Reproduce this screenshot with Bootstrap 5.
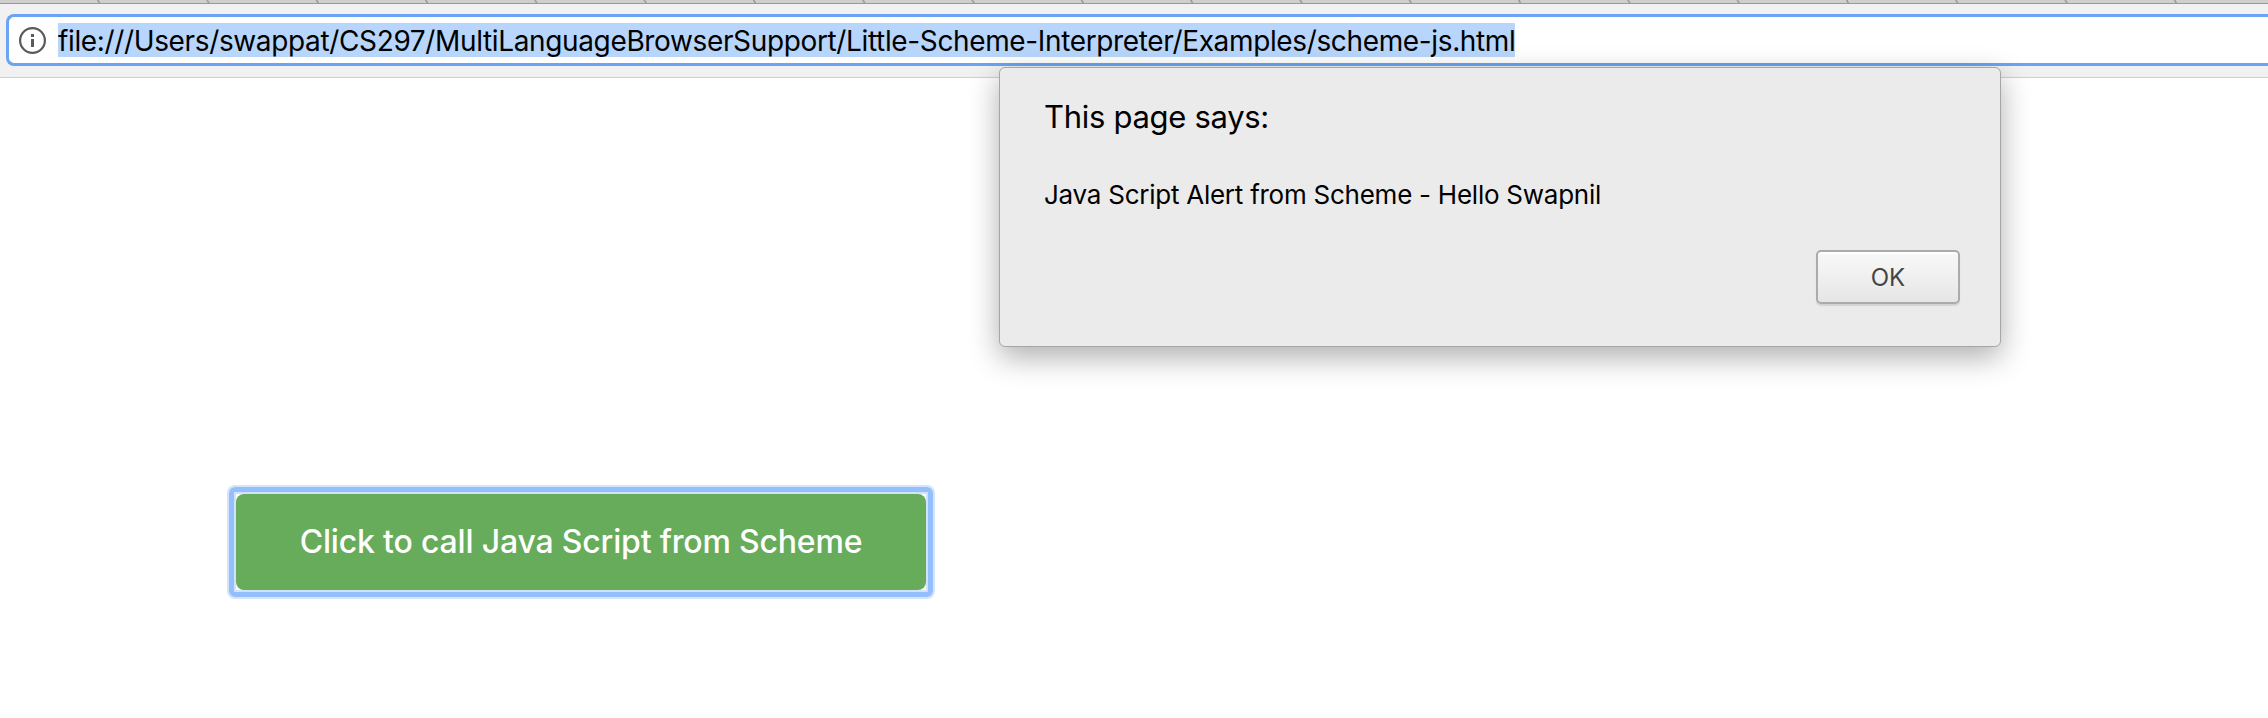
<!DOCTYPE html>
<html lang="en">
<head>
<meta charset="utf-8">
<title>scheme-js.html</title>
<link href="https://cdn.jsdelivr.net/npm/bootstrap@5.3.0/dist/css/bootstrap.min.css" rel="stylesheet">
<style>
  body { font-family: Inter, "Liberation Sans", sans-serif; color: #000; background: #fff; }
  .window { height: 718px; }
  .tab-strip { height: 4px; background: #cfcfcf; border-bottom: 1px solid #989898; }
  .tab-strip svg { display: block; }
  .toolbar { height: 74px; padding: 10px 0 0 6px; background: #f1f1f1; border-bottom: 1px solid #cfcfcf; }
  .omnibox { height: 52px; padding-left: 10px; background: #fff; border: 3px solid #6aa4f2; border-right: 0; border-radius: 8px 0 0 8px; }
  .url-text { margin-left: 12px; height: 34px; line-height: 36px; font-size: 28px; letter-spacing: -.36px; background: #b8d6fb; }
  .alert-box { left: 999px; top: 67px; width: 1002px; height: 280px; padding: 24px 40px 42px 44px; background: #ebebeb; border: 1px solid #a6a6a6; border-radius: 6px; box-shadow: 0 10px 30px rgba(0,0,0,.32); }
  .alert-title { font-size: 31px; line-height: 50px; letter-spacing: -.3px; }
  .alert-message { font-size: 26px; line-height: 40px; margin-top: 33px; letter-spacing: -.25px; }
  .ok-button { width: 144px; height: 54px; padding: 2px 0 0; font-size: 24px; color: #444; background: linear-gradient(#f7f7f7, #f2f2f2 38%, #e5e5e5); border: 2px solid #ababab; border-radius: 5px; box-shadow: 0 2px 1px rgba(0,0,0,.1), inset 0 2px 1px #fff; text-shadow: 0 1px 0 #f4f4f4; }
  .page { padding: 416px 0 0 236px; }
  .call-button { width: 690px; height: 96px; padding: 0; font-size: 32px; font-weight: 500; color: #fff; background: #67ac5b; border: 0; border-radius: 8px; letter-spacing: -.18px; position: relative; }
  .call-button::before { content: ""; position: absolute; inset: -7px; border: 5px solid #94bffb; border-radius: 6px; box-shadow: 0 0 0 2px #d3e4fd, inset 0 0 0 2px #d0e2fd; z-index: -1; }
</style>
</head>
<body>
<div class="window position-relative overflow-hidden">
  <div class="tab-strip">
    <svg width="2268" height="3">
      <defs><pattern id="tabs" x="97.2" width="109.3" height="3" patternUnits="userSpaceOnUse"><path d="M.5 0 2.5 3" stroke="#858585" stroke-width="1.2"/></pattern></defs>
      <rect width="2268" height="3" fill="url(#tabs)"/>
    </svg>
  </div>
  <div class="toolbar">
    <div class="omnibox d-flex align-items-center">
      <svg width="27" height="27" viewBox="0 0 27 27" class="flex-shrink-0"><circle cx="13.5" cy="13.5" r="12.4" fill="none" stroke="#5a5a5a" stroke-width="2.2"/><path d="M12 7h3v3h-3zM12 12h3v8h-3z" fill="#5a5a5a"/></svg>
      <span class="url-text text-nowrap">file:///Users/swappat/CS297/MultiLanguageBrowserSupport/Little-Scheme-Interpreter/Examples/scheme-js.html</span>
    </div>
  </div>
  <main class="page position-relative z-0">
    <button type="button" class="btn call-button"><span>Click to call Java Script from Scheme</span></button>
  </main>
  <div class="alert-box position-absolute z-1 d-flex flex-column" role="alertdialog">
    <div class="alert-title"><span>This page says:</span></div>
    <div class="alert-message"><span>Java Script Alert from Scheme - Hello Swapnil</span></div>
    <button type="button" class="btn ok-button mt-auto align-self-end"><span>OK</span></button>
  </div>
</div>
<script src="https://cdn.jsdelivr.net/npm/bootstrap@5.3.0/dist/js/bootstrap.bundle.min.js"></script>
</body>
</html>
